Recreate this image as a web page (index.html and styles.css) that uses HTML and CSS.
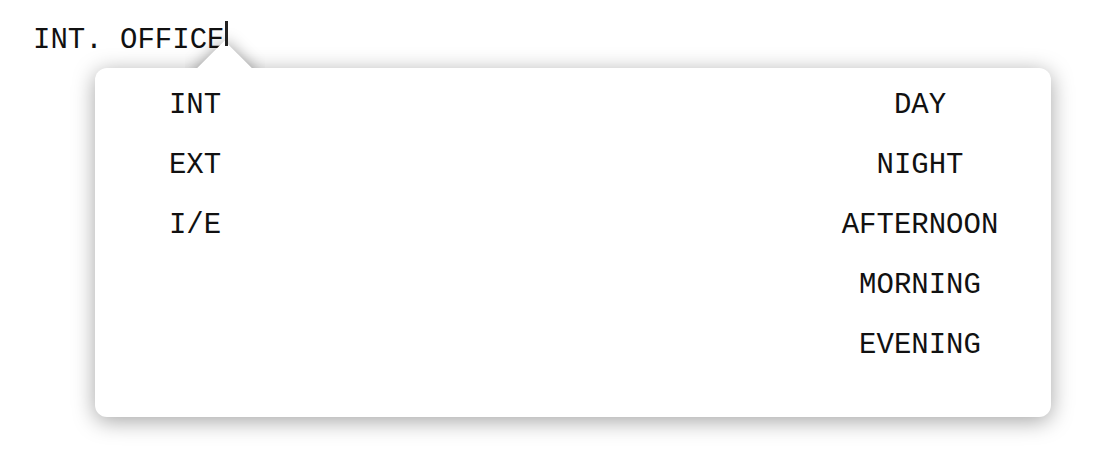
FILE: index.html
```html
<!DOCTYPE html>
<html lang="en">
<head>
    <meta charset="UTF-8">
    <meta name="viewport" content="width=device-width, initial-scale=1.0">
    <title>Scene Heading</title>
    <link rel="stylesheet" href="styles.css">
</head>
<body>
    <!-- Scene heading being typed -->
    <div class="heading">INT. OFFICE<span class="caret"></span></div>

    <!-- Autocomplete popover -->
    <div class="popover">
        <div class="arrow"><div class="arrow-tip"></div></div>
        <ul class="column column-left">
            <li>INT</li>
            <li>EXT</li>
            <li>I/E</li>
        </ul>
        <ul class="column column-right">
            <li>DAY</li>
            <li>NIGHT</li>
            <li>AFTERNOON</li>
            <li>MORNING</li>
            <li>EVENING</li>
        </ul>
    </div>
</body>
</html>
```

FILE: styles.css
```css
body {
    margin: 0;
    padding-bottom: 50px;
    background-color: #fff;
    font-family: "Courier New", Courier, "Liberation Mono", monospace;
    font-size: 29px;
    color: #111;
}
.heading {
    margin: 26px 0 0 33px;
    height: 29px;
    line-height: 29px;
    white-space: pre;
}
.caret {
    display: inline-block;
    width: 3px;
    height: 25px;
    margin-left: 1px;
    background-color: #222;
    vertical-align: -5px;
    position: relative;
    top: -7px;
    z-index: 3;
}
.popover {
    position: relative;
    display: flex;
    justify-content: space-between;
    margin: 13px 0 0 95px;
    width: 956px;
    padding: 8px 0 41px;
    background-color: #fff;
    border-radius: 12px;
    box-shadow: 0 4px 22px rgba(0, 0, 0, 0.36);
}
/* arrow pointing at the caret */
.arrow {
    position: absolute;
    top: -40px;
    left: 90px;
    width: 80px;
    height: 40px;
    overflow: hidden;
    z-index: 2;
}
.arrow-tip {
    position: absolute;
    left: 17px;
    top: 22px;
    width: 45px;
    height: 45px;
    background-color: #fff;
    transform: rotate(45deg);
    box-shadow: 0 0 16px rgba(0, 0, 0, 0.38);
}
.column {
    list-style: none;
    margin: 0;
    padding: 0;
    width: 200px;
}
.column-right {
    margin-right: 31px;
}
.column li {
    height: 60px;
    line-height: 60px;
    text-align: center;
}
```
